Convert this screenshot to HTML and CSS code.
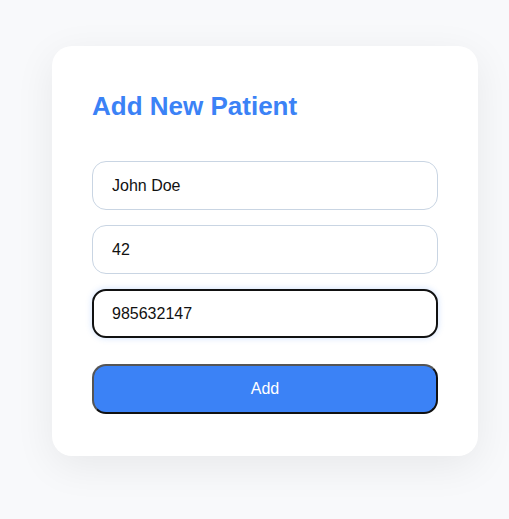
FILE: index.html
```html
<!DOCTYPE html>
<html lang="en">
<head>
<meta charset="utf-8">
<title>Add New Patient</title>
<link rel="stylesheet" href="styles.css">
</head>
<body>
  <div class="page">
    <form class="card">
      <h2 class="title">Add New Patient</h2>
      <div class="fields">
        <input class="field" type="text" value="John Doe">
        <input class="field" type="text" value="42">
        <input class="field field-focus" type="text" value="985632147">
      </div>
      <button class="btn" type="button">Add</button>
    </form>
  </div>
</body>
</html>
```

FILE: styles.css
```css
* { box-sizing: border-box; }
html, body {
  margin: 0;
  padding: 0;
  background: #f8f9fb;
  font-family: "Liberation Sans", Arial, sans-serif;
}
.page {
  min-height: 519px;
  padding: 46px 0 60px 52px;
}
.card {
  width: 426px;
  background: #ffffff;
  border-radius: 20px;
  padding: 40px 40px 42px;
  box-shadow: 0 10px 40px rgba(0, 0, 0, 0.07);
  display: flex;
  flex-direction: column;
}
.title {
  margin: 0 0 35px;
  font-size: 26px;
  line-height: 40px;
  font-weight: 700;
  color: #3b82f6;
}
.fields {
  display: flex;
  flex-direction: column;
  gap: 15px;
}
.field {
  width: 100%;
  height: 49px;
  border: 1px solid #c9d5e3;
  border-radius: 14px;
  padding: 0 19px;
  font-family: "Liberation Sans", Arial, sans-serif;
  font-size: 16px;
  color: #111;
  background: #fff;
  outline: none;
}
.field-focus {
  border: 2px solid #111;
  padding: 0 18px;
  box-shadow: 0 0 6px rgba(59, 130, 246, 0.25);
}
.btn {
  margin-top: 26px;
  height: 50px;
  width: 100%;
  background: #3b82f6;
  color: #fff;
  font-family: "Liberation Sans", Arial, sans-serif;
  font-size: 16px;
  border-radius: 14px;
  border-width: 2px;
  border-style: solid;
  border-color: #555 #111 #111 #555;
  cursor: pointer;
}
```
